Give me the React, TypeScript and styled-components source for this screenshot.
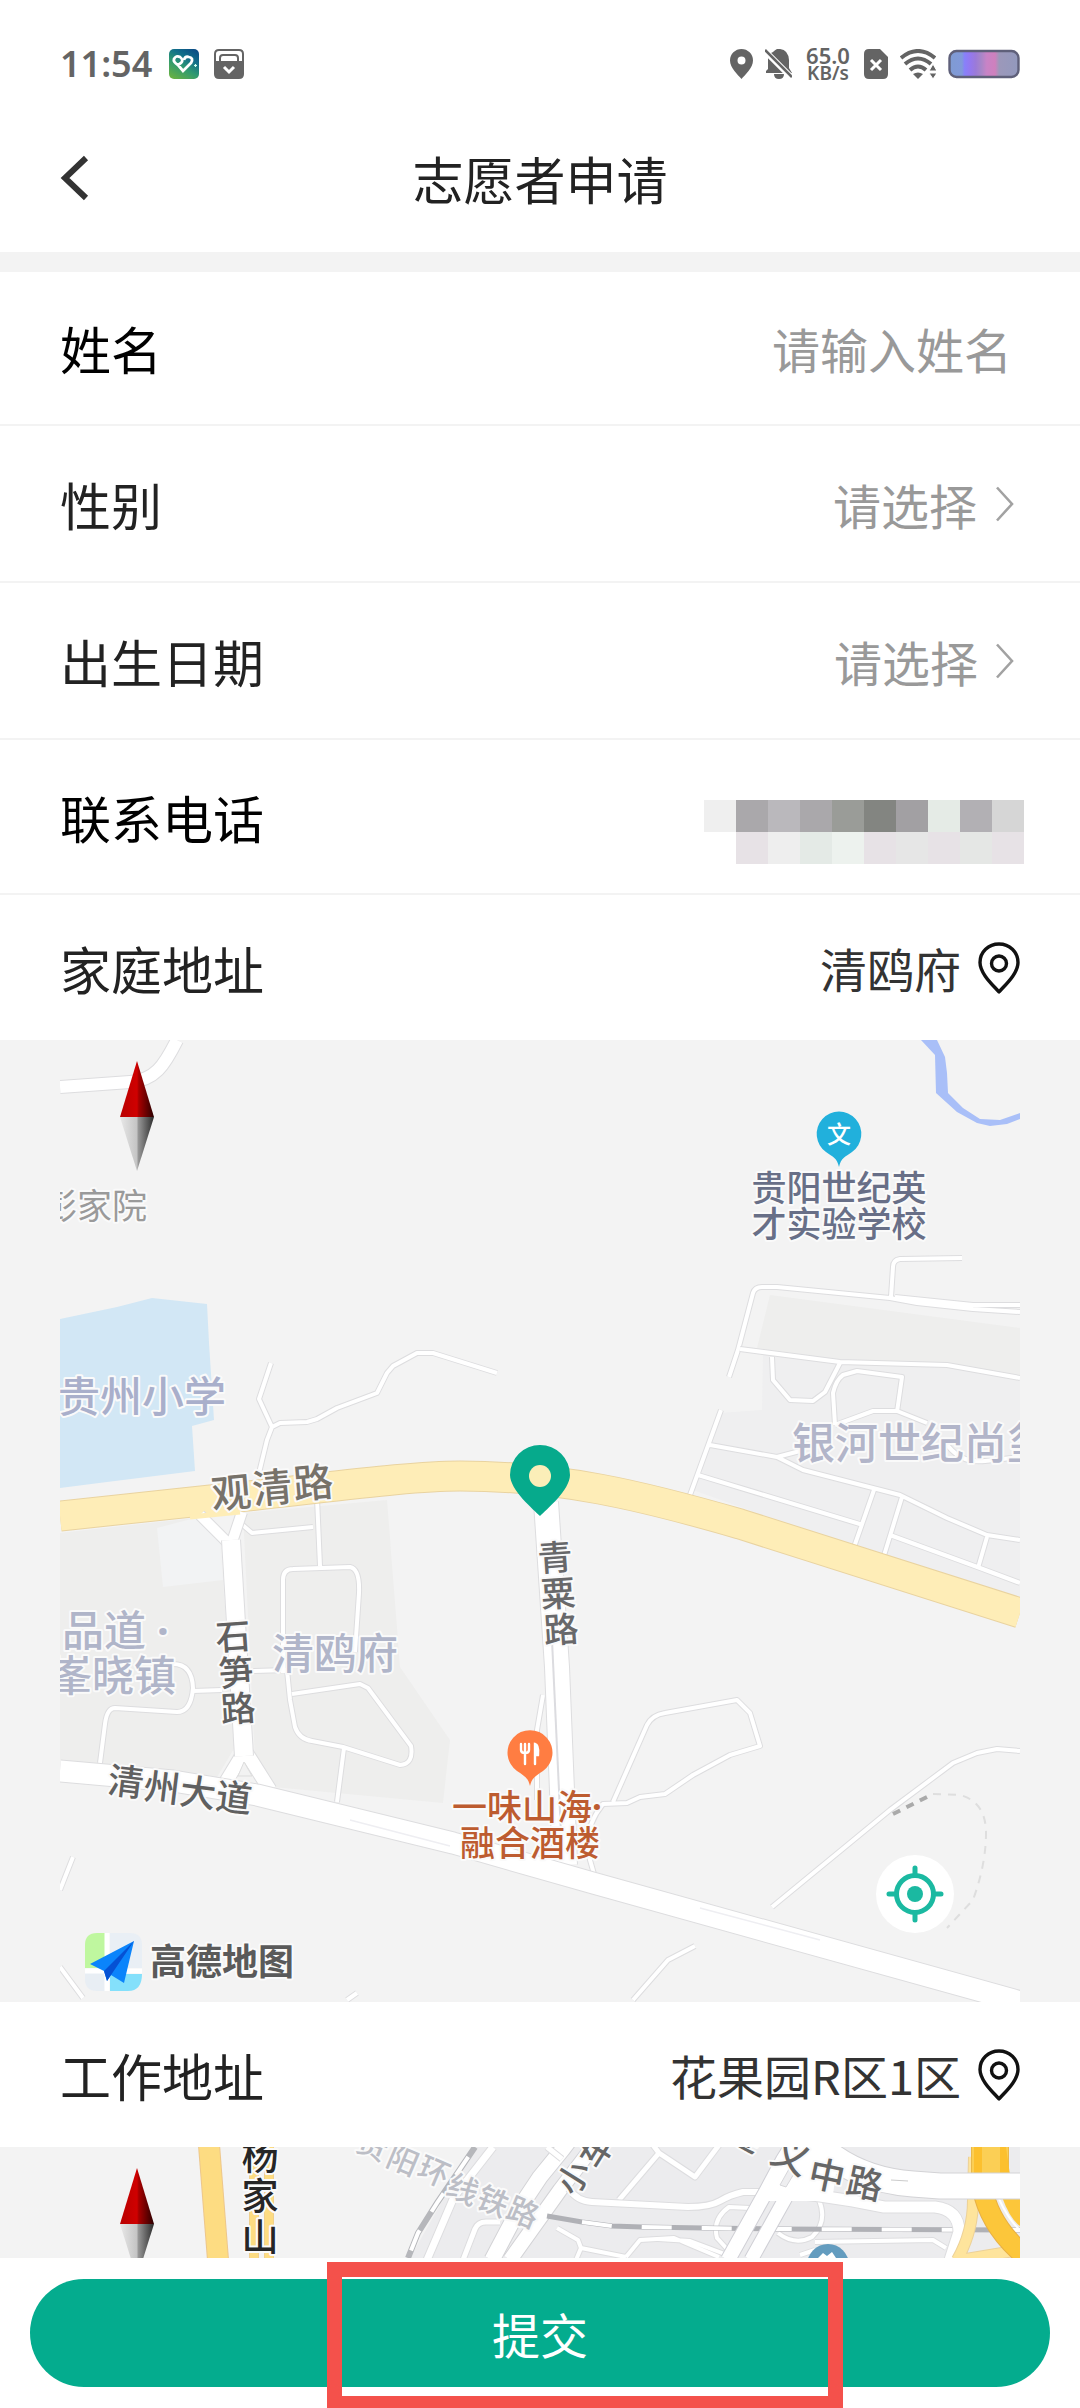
import { useState } from 'react';
import styled, { createGlobalStyle } from 'styled-components';

const GlobalStyle = createGlobalStyle`
  * {
    box-sizing: border-box;
  }
  body {
    margin: 0;
    background-color: #fff;
    font-family: 'Noto Sans CJK SC', 'Noto Sans', sans-serif;
  }
  button, input, select {
    margin: 0;
    padding: 0;
    border: 0;
    background: none;
    font-family: inherit;
    appearance: none;
    outline: none;
  }
`;

const Page = styled.div`
  display: flex;
  flex-direction: column;
  width: 100%;
  overflow: hidden;
`;

const StatusBar = styled.div`
  display: flex;
  justify-content: space-between;
  align-items: center;
  height: 108px;
  padding: 20px 60px 0;
  color: #646464;
  font-family: 'Noto Sans', sans-serif;
`;
const StatusGroup = styled.div<{ $gap: number }>`
  display: flex;
  align-items: center;
  gap: ${({ $gap }) => $gap}px;
`;
const Clock = styled.span`
  margin-right: 2px;
  font-size: 36px;
  font-weight: 600;
  line-height: 40px;
`;
const Speed = styled.div`
  display: flex;
  flex-direction: column;
  width: 48px;
  align-items: center;
  font-weight: 600;
  font-size: 22px;
  line-height: 18px;
`;
const SpeedUnit = styled.span`
  font-size: 19px;
`;

const Header = styled.header`
  display: grid;
  grid-template-columns: 1fr auto 1fr;
  align-items: center;
  height: 144px;
  padding: 0 60px 4px;
`;
const BackButton = styled.button`
  display: flex;
  width: 48px;
  cursor: pointer;
`;
const Title = styled.h1`
  margin: 0;
  color: #222;
  font-size: 51px;
  font-weight: 400;
  line-height: 60px;
`;

const Form = styled.form`
  border-top: 20px solid #f3f3f3;
`;
const Row = styled.div<{ $height: number; $line?: boolean }>`
  display: flex;
  align-items: center;
  justify-content: space-between;
  height: ${({ $height }) => $height}px;
  padding: 0 60px;
  border-bottom: ${({ $line }) => ($line ? '2px solid #f3f3f3' : '0')};
`;
const Label = styled.label<{ $dark?: boolean }>`
  color: ${({ $dark }) => ($dark ? '#000' : '#222')};
  font-size: 51px;
  line-height: 60px;
`;
const NameInput = styled.input`
  flex: 1;
  min-width: 0;
  padding-right: 8px;
  color: #333;
  font-size: 48px;
  line-height: 60px;
  text-align: right;
  &::placeholder {
    color: #999;
    opacity: 1;
  }
`;
const Picker = styled.div`
  display: flex;
  align-items: center;
  gap: 18px;
  padding-right: 6px;
`;
const PickerSelect = styled.select`
  color: #999;
  font-size: 48px;
  line-height: 60px;
  cursor: pointer;
`;
const PickerButton = styled.button`
  color: #999;
  font-size: 48px;
  line-height: 60px;
  cursor: pointer;
`;
const AddressButton = styled.button`
  display: flex;
  align-items: center;
  gap: 17px;
  color: #333;
  font-size: 47px;
  line-height: 60px;
  cursor: pointer;
`;
const Mosaic = styled.output`
  display: grid;
  grid-template-columns: repeat(10, 32px);
  grid-auto-rows: 32px;
  margin: 30px -4px 0 0;
`;
const MosaicCell = styled.span<{ $color: string }>`
  background-color: ${({ $color }) => $color};
`;

const MapBox = styled.section`
  position: relative;
  padding: 0 60px;
  background-color: #f3f3f3;
`;
const MapSvg = styled.svg`
  display: block;
  width: 100%;
  height: auto;
`;
const MapText = styled.text<{ $size: number; $color: string; $weight?: number }>`
  font-size: ${({ $size }) => $size}px;
  font-weight: ${({ $weight = 500 }) => $weight};
  fill: ${({ $color }) => $color};
  stroke: #fafafa;
  stroke-width: 4px;
  stroke-linejoin: round;
  paint-order: stroke;
`;
const Dot = styled.tspan`
  font-family: 'Noto Sans', sans-serif;
  font-weight: 700;
`;
const LocateButton = styled.button`
  position: absolute;
  right: 126px;
  bottom: 69px;
  display: flex;
  width: 78px;
  height: 78px;
  border-radius: 50%;
  background-color: #fff;
  cursor: pointer;
`;

const Footer = styled.footer`
  position: relative;
  padding: 21px 30px;
  background-color: #fff;
  overflow: hidden;
`;
const SubmitButton = styled.button`
  display: block;
  width: 100%;
  height: 108px;
  border-radius: 54px;
  background-color: #04ac8e;
  color: #fff;
  font-size: 48px;
  cursor: pointer;
`;
const Highlight = styled.div`
  position: absolute;
  top: 4px;
  left: 327px;
  right: 237px;
  height: 149px;
  border: 15px solid #f4514b;
  pointer-events: none;
`;

const mosaicTop = ['#efefef', '#aaa8ab', '#bab8bc', '#aaa8ab', '#9a9c98', '#838581', '#a2a0a3', '#e5ebe6', '#b2b0b4', '#d6d6d6'];
const mosaicBottom = ['transparent', '#e7e2e6', '#eeeeee', '#e4eae6', '#edf2ee', '#e7e2e6', '#e6e6e6', '#e7e2e6', '#e5e7e5', '#e7e2e6'];

interface RoadProps {
  d: string;
  width?: number;
  color?: string;
  edge?: string;
}
const Roads = ({ d, width = 4, color = '#fff', edge = '#dddddf' }: RoadProps) => (
  <g fill="none" strokeLinejoin="round">
    <path d={d} stroke={edge} strokeWidth={width + 2} />
    <path d={d} stroke={color} strokeWidth={width} />
  </g>
);

interface StackedTextProps {
  chars: [string, number, number][];
  angle: number;
  size: number;
  color: string;
  weight?: number;
}
// road names: every character is centred on its own point along the road
const StackedText = ({ chars, angle, size, color, weight }: StackedTextProps) => (
  <>
    {chars.map(([char, x, y]) => (
      <MapText
        key={char}
        x="0"
        y={size * 0.38}
        textAnchor="middle"
        transform={`translate(${x} ${y}) rotate(${angle})`}
        $size={size}
        $color={color}
        $weight={weight}
      >
        {char}
      </MapText>
    ))}
  </>
);

const Compass = ({ id }: { id: string }) => (
  <g>
    <defs>
      <linearGradient id={`${id}-red`}>
        <stop offset="0" stopColor="#b80000" />
        <stop offset="0.5" stopColor="#d00000" />
        <stop offset="0.55" stopColor="#a80000" />
        <stop offset="1" stopColor="#2a0000" />
      </linearGradient>
      <linearGradient id={`${id}-gray`}>
        <stop offset="0" stopColor="#e8e8e8" />
        <stop offset="0.5" stopColor="#c4c4c4" />
        <stop offset="0.53" stopColor="#999" />
        <stop offset="1" stopColor="#2c2c2c" />
      </linearGradient>
    </defs>
    <path d="M77 21L94 77H60Z" fill={`url(#${id}-red)`} />
    <path d="M60 77H94L77 131Z" fill={`url(#${id}-gray)`} />
  </g>
);

const Chevron = () => (
  <svg width="18" height="36" viewBox="0 0 18 36" fill="none" stroke="#a2a2a2" strokeWidth="2.6">
    <path d="M1 1.5L16 18L1 34.5" />
  </svg>
);

const PinIcon = () => (
  <svg width="42" height="52" viewBox="0 0 42 52" fill="none" stroke="#111" strokeWidth="3.4">
    <path d="M21 50C16 44 2 32 2 20.5C2 10 10.500 2 21 2S40 10 40 20.500C40 32 26 44 21 50Z" strokeLinejoin="round" />
    <circle cx="21" cy="21.500" r="7.500" />
  </svg>
);

const HomeMap = () => (
  <MapSvg viewBox="0 0 960 962" role="img" aria-label="家庭地址地图">
    <path d="M861 0L875 15L876 53L897 72L917 83L930 86L947 84L960 79V73L940 80L920 79L903 68L888 53L887 33L885 17L877 0Z" fill="#a9bff8" />
    <path d="M0 279L57 267L92 258L147 264L149 303L154 380L132 386L135 431L47 442L0 448Z" fill="#d2e7f5" />
    <g fill="#eeeeed">
      <path d="M710 255L960 288V337L887 323L780 320L697 308Z" />
      <path d="M703 313L780 322L887 325L960 340V560L780 503L633 450L660 373L702 370Z" fill="#efeff0" />
      <path d="M0 493L135 478L160 500L175 707L157 737L0 720Z" />
      <path d="M183 473L327 460L340 627L390 700L383 763L213 747L195 720Z" />
    </g>
    <path d="M97 488L103 547L163 540L160 500L135 478Z" fill="#f2f3f4" />

    <Roads width={12} d="M0 47L70 42C95 40 104 26 117 0" />
    <Roads d="M211 323L199 359L212 387L207 400L199 433M212 387L220 383L247 382L257 379L277 368L317 353L327 333L333 326L357 313H373L437 333" />
    <Roads d="M669 337L678 310L693 253Q695 247 702 247H717L830 258L857 263L913 269L960 272M831 257L833 227Q833 220 840 219L902 218M835 257L913 265H960" />
    <Roads d="M680 309L780 322L887 325L960 338M712 317L713 340L730 360L753 361L765 352L780 323M775 385L773 353Q776 340 783 335L797 331L842 337L837 372M775 385L813 371H837L867 383" />
    <Roads d="M661 370L630 455M650 405L717 417L743 430L840 455L887 478L927 495L960 500M717 417L740 411M638 435L803 485M815 447L793 510M842 457L822 522M830 495L920 528L960 543M927 497L918 528M885 402Q900 424 925 421L960 417" />
    <Roads d="M257 458L260 526M178 481L192 493L253 487M223 633V540Q223 529 233 529L290 527Q300 529 299 553L295 612M227 630L230 660L235 687Q239 699 252 701L283 707L340 725Q354 724 351 706L308 648L300 644L232 654M284 708L277 762M193 631L227 630M133 651L162 650M113 624Q132 624 133 648Q131 672 117 672L55 668Q47 668 45 684L40 723" />
    <Roads d="M553 762L587 685Q592 675 605 673L677 660L690 673L700 706L670 715L633 735L605 754L580 757L567 763L543 764Q522 790 530 820L534 834" />
    <Roads d="M712 867L830 770L893 723L917 713L937 709L960 711M635 906L608 920L573 960M13 817L0 850M0 927L23 958M297 953L287 960M483 655L477 690V760" />
    <path d="M833 774L867 757" stroke="#aaa" strokeWidth="4" strokeDasharray="8 7" />
    <path d="M873 754L900 755Q926 762 926 793T913 860L887 888" fill="none" stroke="#dedede" strokeWidth="2" strokeDasharray="8 7" />

    <Roads width={29} color="#feedb7" edge="#e9d3a0" d="M0 476L160 459C273 447 350 436 400 436C500 436 580 455 680 484L960 573" />
    <Roads width={10} d="M140 475L168 503M182 472L171 505" />
    <Roads width={13} d="M184 712L164 745M186 712L210 750" />
    <Roads width={18} d="M171 500L184 716" />
    <Roads width={24} d="M486 462L497 627L505 825" />
    <path d="M492 600L502 815" stroke="#dcdce0" strokeWidth="2" />
    <Roads width={21} d="M0 731L113 741L197 755L393 803L533 843L968 964" />
    <path d="M184 722L178 736H192Z" fill="#f2f2f2" stroke="#ddd" />
    <path d="M130 477L180 472" stroke="#feedb7" strokeWidth="5" />
    <path d="M290 780L390 806M640 868L760 900" stroke="#eeeef2" strokeWidth="1.500" />

    <MapText x="87" y="179" textAnchor="end" $size={35} $color="#9a9a9a" $weight={400}>彭家院</MapText>
    <MapText x="-2" y="372" $size={42} $color="#a9afcb">贵州小学</MapText>
    <MapText x="732" y="419" $size={43} $color="#b2b5c9">银河世纪尚玺</MapText>
    <MapText x="2" y="606" $size={42} $color="#b0b5c9">品道<Dot> ·</Dot></MapText>
    <MapText x="-10" y="651" $size={42} $color="#b0b5c9">峯晓镇</MapText>
    <MapText x="212" y="629" $size={42} $color="#b0b5c9">清鸥府</MapText>
    <MapText x="779" y="161" textAnchor="middle" $size={35} $color="#686f87">贵阳世纪英</MapText>
    <MapText x="779" y="197" textAnchor="middle" $size={35} $color="#686f87">才实验学校</MapText>
    <StackedText chars={[['观', 171, 452], ['清', 212, 447], ['路', 253, 442]]} angle={-5} size={40} color="#77726a" />
    <StackedText chars={[['石', 173, 596], ['笋', 176, 632], ['路', 178, 668]]} angle={-4} size={35} color="#606060" />
    <StackedText chars={[['清', 66, 741], ['州', 102, 747], ['大', 138, 752], ['道', 174, 757]]} angle={7} size={36} color="#606060" />
    <StackedText chars={[['青', 495, 517], ['粟', 498, 553], ['路', 501, 589]]} angle={-4} size={35} color="#68686a" />
    <MapText x="392" y="780" $size={35} $color="#bd5c30">一味山海<Dot>·</Dot></MapText>
    <MapText x="470" y="816" textAnchor="middle" $size={35} $color="#bd5c30">融合酒楼</MapText>

    <path d="M779 127C777 118 773 117 766 112A22.300 22.300 0 1 1 792 112C785 117 781 118 779 127Z" fill="#21b0dc" />
    <text x="779" y="103" textAnchor="middle" fontSize="24" fontWeight="500" fill="#fff">文</text>
    <path d="M470 746C468 737 464 736 457 731A22.500 22.500 0 1 1 483 731C476 736 472 737 470 746Z" fill="#ff7d42" />
    <g fill="none" stroke="#fff" strokeWidth="2.400" strokeLinecap="round">
      <path d="M461 704V710Q461 713 465 713T469 710V704M465 704V724" />
      <path d="M475 724V704Q479 705 478 715H475" fill="#fff" />
    </g>
    <path d="M480 476C474 470 450 450 450 435A30 30 0 0 1 510 435C510 450 486 470 480 476Z" fill="#06aa8c" />
    <circle cx="480" cy="436" r="11" fill="#fbeeb8" />

    <path d="M25 928V905Q25 893 37 893H47V928Z" fill="#bff79f" />
    <path d="M50 893H70Q82 893 82 905V928H50Z" fill="#e9eff5" />
    <path d="M25 932H47V951H37Q25 951 25 939Z" fill="#e8eef4" />
    <path d="M50 934H82Q82 951 68 951H50Z" fill="#84e0fb" />
    <path d="M47 893V951M25 931H82" stroke="#fff" strokeWidth="5" />
    <path d="M30 924L74 901L64 943L51 935L47 941L44 931Z" fill="#0b84fb" />
    <path d="M44 931L74 901L51 935L47 941Z" fill="#0551d4" />
    <MapText x="90" y="935" $size={36} $color="#5a5a5a" $weight={700}>高德地图</MapText>
    <Compass id="home" />
  </MapSvg>
);

const WorkMap = () => (
  <MapSvg viewBox="0 0 960 111" role="img" aria-label="工作地址地图">
    <path d="M413 0H960V111H350Z" fill="#ececee" />
    <Roads width={20} color="#fddc82" edge="#edc78c" d="M149 -2L158 113" />
    <Roads width={8} color="#fddc82" edge="#f0d08c" d="M194 -2V113M209 -2V113" />

    <path d="M415 0L377 56L358 86L348 111" fill="none" stroke="#b6b7bb" strokeWidth="6" />
    <path d="M415 0L377 56L358 86L348 111" fill="none" stroke="#fff" strokeWidth="4" strokeDasharray="22 22" strokeDashoffset="-12" />
    <Roads width={7} d="M433 0L394 50L367 113" />
    <Roads width={5} d="M403 113L415 82Q418 75 426 75H440" />
    <Roads width={15} edge="#d3d3d6" d="M518 -18L502 3L480 30L460 60L432 113" />
    <Roads width={14} edge="#d3d3d6" d="M542 -12L500 43L450 113" />
    <Roads width={5} d="M559 53L599 6L593 -2M599 6L635 30L659 -2M487 0L502 12" />
    <Roads width={6} d="M509 42Q517 54 532 55L628 60Q650 60 660 54T683 45H710" />
    <Roads d="M690 61L669 60Q652 72 657 91L668 103M759 53Q768 75 752 90Q735 99 718 86M755 95L873 93L886 101M740 108L755 103" />
    <Roads d="M497 81L518 93L521 101L566 110M521 101L516 113M566 110L580 93L614 91L659 110M598 92L630 94L670 109" />
    <path d="M487 69L522 75L552 79L582 80L645 81L714 82L960 83" fill="none" stroke="#b0b1b6" strokeWidth="5" />
    <path d="M522 75L552 79L582 80L645 81L714 82L960 83" fill="none" stroke="#fff" strokeWidth="4" strokeDasharray="30 30" />
    <Roads width={14} edge="#d0d0d6" d="M740 -14L723 13L707 43L668 113" />
    <Roads width={13} edge="#d0d0d6" d="M775 -20L745 23L730 43L691 113" />
    <Roads width={11} d="M735 46L760 49L793 54L824 60H875Q899 63 899 85L890 113" />
    <Roads width={10} color="#fee49c" edge="#ecd199" d="M914 10L913 53Q913 85 897 113M900 113L960 103" />
    <Roads width={36} color="#fbcf55" edge="#eab84a" d="M930 -4V30" />
    <path d="M914 0H922V30H914ZM940 0H946L950 28H940Z" fill="#fcc02e" />
    <Roads width={19} color="#fcc63a" edge="#e8b045" d="M922 40Q930 82 970 113" />
    <path d="M942 50Q950 72 960 79V50Z" fill="#fcc63a" />
    <path d="M939 52Q948 72 960 83" fill="none" stroke="#fff" strokeWidth="2" />
    <Roads width={25} edge="#d3d3d6" d="M745 -16Q785 32 853 37L880 39H962" />
    <path d="M730 0H780L772 54H706Z" fill="#fff" />
    <path d="M720 38L729 22L735 25L726 40Z" fill="#eeeef0" stroke="#d6d6da" />
    <path d="M831 33L848 34" stroke="#ccc" />

    <StackedText chars={[['杨', 200, 9], ['家', 200, 49], ['山', 200, 90]]} angle={0} size={37} color="#262626" />
    <StackedText chars={[['贵', 313, -2], ['阳', 343, 13], ['环', 374, 24], ['线', 403, 42], ['铁', 433, 54], ['路', 463, 65]]} angle={23} size={31} color="#bcbec6" />
    <StackedText chars={[['小', 513, 30], ['车', 536, 3]]} angle={-58} size={33} color="#666" />
    <StackedText chars={[['遵', 686, -14]]} angle={30} size={36} color="#666" />
    <StackedText chars={[['义', 731, 9]]} angle={24} size={37} color="#666" />
    <StackedText chars={[['中', 767, 28], ['路', 805, 36]]} angle={12} size={36} color="#666" />
    <circle cx="768" cy="118" r="21" fill="#639cbf" />
    <path d="M758 111L763 106L767 109L772 105L776 111Z" fill="#fff" />
    <Compass id="work" />
  </MapSvg>
);

const StatusIcons = () => (
  <StatusGroup $gap={12}>
    <svg width="23" height="30" viewBox="0 0 23 30" fill="#646464">
      <path fillRule="evenodd" d="M11.500 30C8 26 0 19 0 11.500A11.500 11.500 0 0 1 23 11.500C23 19 15 26 11.500 30ZM11.500 7.500A4 4 0 1 0 11.500 15.500A4 4 0 0 0 11.500 7.500Z" />
    </svg>
    <svg width="27" height="30" viewBox="0 0 27 30" fill="#646464">
      <path d="M8 3Q10 1 12 0Q23 -1 24 11V19L27 24H1V22L3 20V10Q3 7 4 5ZM9 25H19Q19 30 14 30T9 25Z" />
      <path d="M-1 1L27 29" stroke="#fff" strokeWidth="6" />
      <path d="M0 1L27 28" stroke="#646464" strokeWidth="2.600" />
    </svg>
    <Speed>
      <span>65.0</span>
      <SpeedUnit>KB/s</SpeedUnit>
    </Speed>
    <svg width="24" height="30" viewBox="0 0 24 30" fill="#646464">
      <path d="M5 0H16L24 8V25Q24 30 19 30H5Q0 30 0 25V5Q0 0 5 0Z" />
      <path d="M7 11L17 21M17 11L7 21" stroke="#fff" strokeWidth="3" />
    </svg>
    <svg width="36" height="30" viewBox="0 0 36 30">
      <g fill="none" stroke="#646464" strokeWidth="4">
        <path d="M1 9Q18 -5 35 9" />
        <path d="M5 15Q18 4 31 15" />
        <path d="M10 21Q18 14 26 21" />
      </g>
      <path d="M18 30L13 25Q18 22 23 25Z" fill="#646464" />
      <path d="M33 15L37 22H29ZM33 30L37 24H29Z" fill="#646464" stroke="#fff" strokeWidth="1" />
    </svg>
    <svg width="72" height="30" viewBox="0 0 72 30">
      <defs>
        <linearGradient id="battery">
          <stop offset="0" stopColor="#7f9bd2" />
          <stop offset="0.180" stopColor="#8199da" />
          <stop offset="0.220" stopColor="#8880fa" />
          <stop offset="0.300" stopColor="#9478ef" />
          <stop offset="0.380" stopColor="#9b7ad8" />
          <stop offset="0.460" stopColor="#a886c8" />
          <stop offset="0.540" stopColor="#c883c6" />
          <stop offset="0.660" stopColor="#cf80bd" />
          <stop offset="0.720" stopColor="#9c98ba" />
          <stop offset="1" stopColor="#9299bd" />
        </linearGradient>
      </defs>
      <rect x="1.500" y="2" width="69" height="26" rx="7" fill="url(#battery)" stroke="#5f607a" strokeWidth="2.400" />
    </svg>
  </StatusGroup>
);

const AppBadges = () => (
  <>
    <svg width="30" height="30" viewBox="0 0 30 30">
      <defs>
        <linearGradient id="badge" x1="0.200" y1="1" x2="0.800" y2="0">
          <stop offset="0" stopColor="#66b045" />
          <stop offset="0.400" stopColor="#2f9a70" />
          <stop offset="0.700" stopColor="#12708a" />
          <stop offset="1" stopColor="#0c4f86" />
        </linearGradient>
      </defs>
      <rect width="30" height="30" rx="5" fill="url(#badge)" />
      <path d="M9 16Q4 13 5 10Q7 6 11 8Q15 11 12 14L9 16L14 22L22 14Q25 9 20 8Q16 7 15 11" fill="none" stroke="#fff" strokeWidth="2.800" />
      <path d="M26.500 15V18M25 16.500H28" stroke="#cfe" strokeWidth="1.200" />
    </svg>
    <svg width="30" height="30" viewBox="0 0 30 30">
      <path d="M1 13V5Q1 1 5 1H25Q29 1 29 5V13" fill="#fff" stroke="#646464" strokeWidth="2" />
      <path d="M6 12V9Q6 6 9 6H21Q24 6 24 9V12" fill="#fff" stroke="#646464" strokeWidth="2" />
      <path d="M0 12H30V25Q30 30 25 30H5Q0 30 0 25Z" fill="#646464" />
      <path d="M10 18L15 23L20 18" fill="none" stroke="#fff" strokeWidth="3" />
    </svg>
  </>
);

const App = () => {
  const [name, setName] = useState('');
  const [gender, setGender] = useState('');

  return (
    <>
      <GlobalStyle />
      <Page>
        <StatusBar>
          <StatusGroup $gap={15}>
            <Clock>11:54</Clock>
            <AppBadges />
          </StatusGroup>
          <StatusIcons />
        </StatusBar>
        <Header>
          <BackButton type="button" aria-label="返回">
            <svg width="30" height="46" viewBox="0 0 30 46" fill="none" stroke="#333" strokeWidth="6">
              <path d="M26 3L5 23L26 43" />
            </svg>
          </BackButton>
          <Title>志愿者申请</Title>
        </Header>
        <Form onSubmit={(e) => e.preventDefault()} id="apply">
          <Row $height={154} $line>
            <Label htmlFor="name" $dark>姓名</Label>
            <NameInput id="name" placeholder="请输入姓名" value={name} onChange={(e) => setName(e.target.value)} />
          </Row>
          <Row $height={157} $line>
            <Label htmlFor="gender">性别</Label>
            <Picker>
              <PickerSelect id="gender" value={gender} onChange={(e) => setGender(e.target.value)}>
                <option value="">请选择</option>
                <option value="male">男</option>
                <option value="female">女</option>
              </PickerSelect>
              <Chevron />
            </Picker>
          </Row>
          <Row $height={157} $line>
            <Label htmlFor="birthday">出生日期</Label>
            <Picker>
              <PickerButton id="birthday" type="button">请选择</PickerButton>
              <Chevron />
            </Picker>
          </Row>
          <Row $height={155} $line>
            <Label htmlFor="phone" $dark>联系电话</Label>
            <Mosaic id="phone">
              {[...mosaicTop, ...mosaicBottom].map((color, index) => (
                <MosaicCell key={index} $color={color} />
              ))}
            </Mosaic>
          </Row>
          <Row $height={145}>
            <Label htmlFor="home">家庭地址</Label>
            <AddressButton id="home" type="button">
              清鸥府
              <PinIcon />
            </AddressButton>
          </Row>
          <MapBox>
            <HomeMap />
            <LocateButton type="button" aria-label="定位">
              <svg width="78" height="78" viewBox="0 0 78 78" fill="none" stroke="#1bb9a1" strokeWidth="5" strokeLinecap="round">
                <circle cx="39" cy="39" r="18.500" />
                <circle cx="39" cy="39" r="8" fill="#1bb9a1" stroke="none" />
                <path d="M39 13V20M39 58V65M13 39H20M58 39H65" />
              </svg>
            </LocateButton>
          </MapBox>
          <Row $height={145}>
            <Label htmlFor="work">工作地址</Label>
            <AddressButton id="work" type="button">
              花果园R区1区
              <PinIcon />
            </AddressButton>
          </Row>
          <MapBox>
            <WorkMap />
          </MapBox>
        </Form>
        <Footer>
          <SubmitButton type="submit" form="apply">提交</SubmitButton>
          <Highlight />
        </Footer>
      </Page>
    </>
  );
};

export default App;
